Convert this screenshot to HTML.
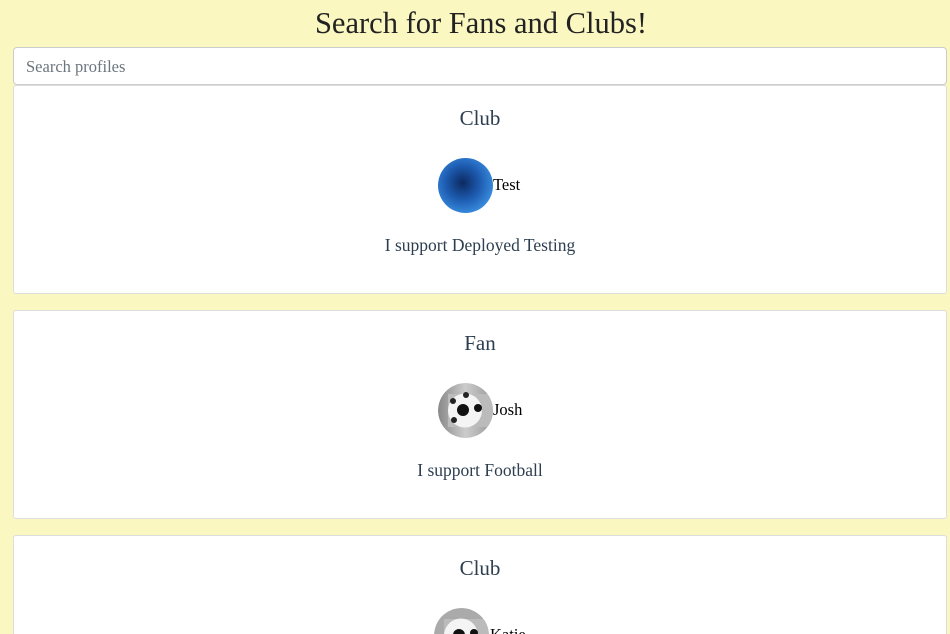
<!DOCTYPE html>
<html style="overflow:hidden;height:634px"><head><style>
body{margin:0;background:#faf7c0;font-family:"Liberation Serif",serif;width:950px;height:634px;overflow:hidden;position:relative}
h1{margin:0;position:absolute;top:6px;left:0;width:962px;text-align:center;font-weight:normal;font-size:30.5px;color:#222;}
.search{position:absolute;left:13px;top:47px;width:934px;height:38px;background:#fff;border:1px solid #ccc;border-radius:4px;box-sizing:border-box;padding-left:12px;line-height:38px;font-size:16.5px;color:#6c757d}
.card{position:absolute;left:13px;width:934px;height:209px;background:#fff;border:1px solid #ddd;border-radius:3px;box-sizing:border-box}
.t{position:absolute;top:20px;width:100%;text-align:center;font-size:21px;color:#2c3e50}
.av{position:absolute;left:424px;top:72px;width:55px;height:55px;border-radius:50%;overflow:hidden}
.nm{position:absolute;left:479px;top:89px;font-size:16.5px;color:#000}
.d{position:absolute;top:149px;width:100%;text-align:center;font-size:17.5px;color:#2c3e50}
</style></head><body>
<h1>Search for Fans and Clubs!</h1>
<div class="search">Search profiles</div>
<div class="card" style="top:85px">
<div class="t">Club</div>
<div class="av" style="background:radial-gradient(ellipse at 45% 45%,#0c2a60 0%,#1d5bb0 40%,#3a8ee0 75%,#7fc4f0 100%)"></div>
<div class="nm">Test</div>
<div class="d">I support Deployed Testing</div>
</div>
<div class="card" style="top:310px">
<div class="t">Fan</div>
<div class="av"><svg width="55" height="55" viewBox="0 0 55 55"><defs><linearGradient id="g" x1="0" x2="1"><stop offset="0" stop-color="#888"/><stop offset=".5" stop-color="#ccc"/><stop offset="1" stop-color="#999"/></linearGradient></defs><circle cx="27.5" cy="27.5" r="27.5" fill="url(#g)"/><rect x="10" y="11" width="45" height="33" fill="#bbb"/><circle cx="27" cy="27.5" r="17" fill="#f4f4f4"/><circle cx="25" cy="27" r="6" fill="#111"/><circle cx="40" cy="25" r="4" fill="#111"/><circle cx="15" cy="18" r="3" fill="#222"/><circle cx="28" cy="12" r="3" fill="#222"/><circle cx="16" cy="37" r="3" fill="#222"/></svg></div>
<div class="nm">Josh</div>
<div class="d">I support Football</div>
</div>
<div class="card" style="top:535px;height:120px">
<div class="t">Club</div>
<div class="av" style="left:420px"><svg width="55" height="55" viewBox="0 0 55 55"><circle cx="27.5" cy="27.5" r="27.5" fill="#aaa"/><rect x="10" y="11" width="45" height="33" fill="#bbb"/><circle cx="27" cy="27.5" r="17" fill="#f4f4f4"/><circle cx="25" cy="27" r="6" fill="#111"/><circle cx="40" cy="25" r="4" fill="#111"/></svg></div>
<div class="nm" style="left:476px">Katie</div>
</div>
</body></html>
